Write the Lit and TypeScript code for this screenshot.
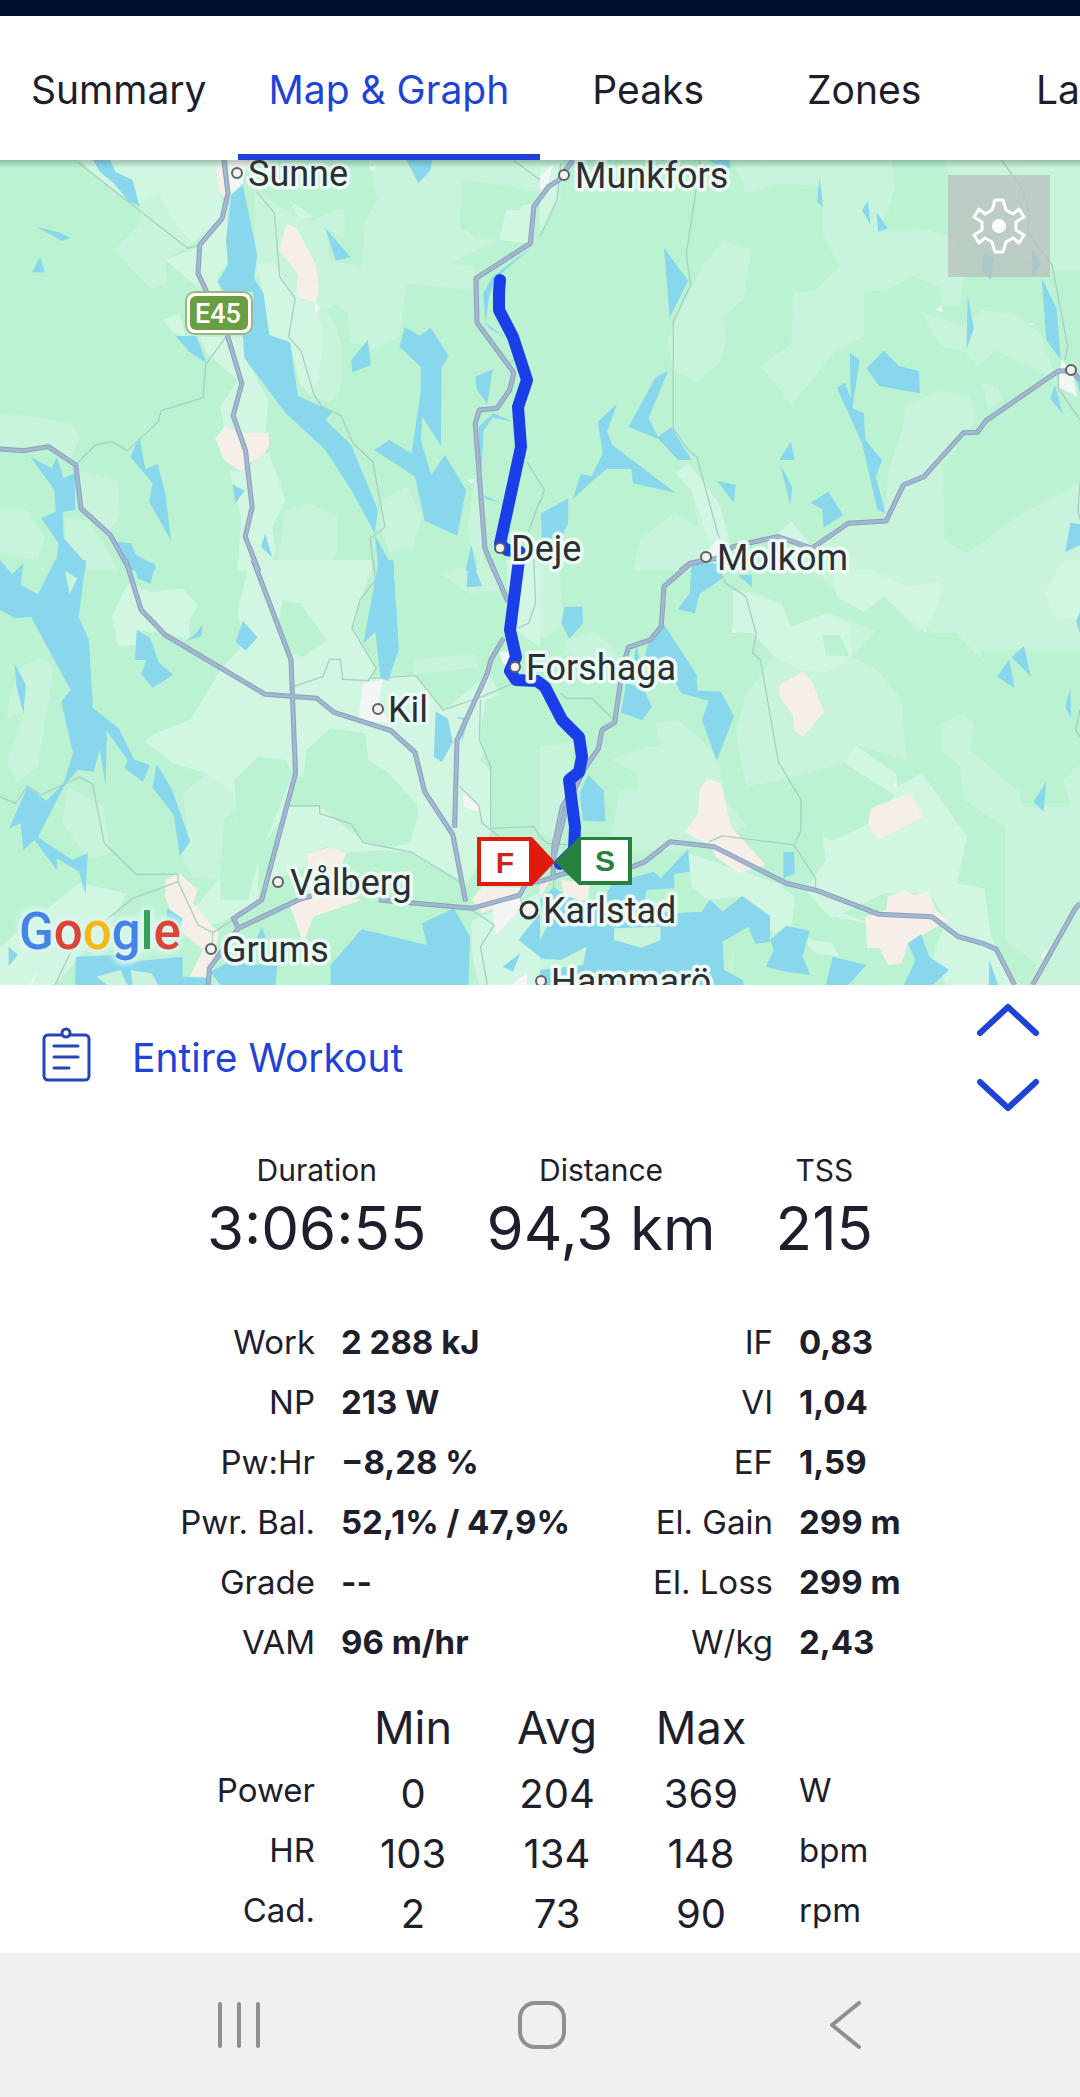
import { LitElement, html, svg, css } from "lit";
import { customElement, property, state } from "lit/decorators.js";

interface Tile {
  x: number;
  y: number;
  pale: string;
  paler: string;
  wood: string;
  sand: string;
  town: string;
  water: string;
  island: string;
  minor: string;
  major: string;
}

interface Place {
  name: string;
  cx: number;
  cy: number;
  x: number;
  y: number;
  big?: boolean;
}

/* Map geometry, split in four tiles. Tile units are about a third of a map unit. */
const TILES: Tile[] = [
  {
    x: 0,
    y: -10,
    pale:
      "M330 300L410 220 405 165 460 130 500 210 560 280 480 330 485 400 440 418ZM740 120L860 200 910 210 1000 170 1000 260 945 240 960 330 1050 350 1060 210 1095 150 1070 30 1568 30 1568 120 1525 125 1500 110 1340 90 1340 240 1450 265 1310 340 1380 350 1370 420 1180 400 1160 560 1080 600 1015 575 1010 490 980 465 910 490 850 440 800 340 740 380ZM0 790L100 800 210 820 235 860 200 940 150 890 0 890ZM220 960L340 990 350 1100 310 1150 235 1075ZM185 1100L260 1110 345 1262 250 1262 190 1165ZM0 1080L80 1080 130 1160 110 1230 0 1210ZM830 1080L900 1060 980 1100 980 1200 950 1262 800 1262ZM1110 1050L1180 1010 1225 1100 1200 1190 1130 1205 1100 1120ZM1380 980L1410 1130 1400 1262 1355 1150ZM905 460L960 490 990 580 990 720 955 760 900 735 870 640Z",
    paler:
      "M400 165L460 130 500 210 560 280 645 200 640 30 230 30 300 100ZM580 290L660 170 660 340 630 380 640 425 600 425 560 400 480 330ZM475 510L520 490 540 560 500 545ZM580 560L705 560 715 630 780 750 770 850 720 850 650 832 640 770 690 690 600 610ZM665 960L700 965 765 915 780 905 830 1050 790 1130 800 1200 780 1262 690 1262 700 1100ZM745 340L800 340 850 440 915 460 940 560 925 690 900 735 870 700 842 577 782 555 765 430ZM1470 180L1545 160 1540 280 1450 270ZM840 150L910 200 870 210Z",
    wood: "M860 120L1080 50 1090 140 1060 180 900 175ZM1345 90L1525 120 1510 180 1450 180 1450 265 1380 265 1335 220Z",
    sand:
      "M832 222L862 235 915 340 927 410 917 458 860 440 865 375 845 345 810 300ZM650 832L720 850 780 848 782 885 765 915 725 940 700 965 650 930 625 865ZM640 30L628 60 635 120 655 150 665 120 655 30Z",
    town: "M662 30H720L705 100 668 135ZM1070 50L1092 48 1080 64ZM915 455L930 475 915 492ZM1355 990L1380 987 1370 1000Z",
    water:
      "M270 30L320 30 335 65 385 90 405 168 375 155 330 100 290 65ZM105 230L175 248 205 265 180 272ZM117 320L130 367 93 367ZM705 105L747 315 737 385 765 430 782 555 842 577 865 737 965 785 945 810 1020 885 1097 1080 1088 1150 1020 1020 945 900 830 790 710 625 705 555 735 500 735 425 650 425 632 395 662 345 656 270 672 135ZM945 235L1018 322 975 332ZM1180 30L1255 30 1250 60 1215 100ZM510 558L570 558 600 640 550 605ZM1068 570L1077 645 1023 667 1020 630ZM1175 532L1220 557 1250 533 1303 617 1282 655 1280 887 1226 800 1222 870 1252 975 1292 915 1353 1020 1328 1157 1233 1112 1205 980 1087 900 1130 870 1195 910 1222 720 1222 650 1160 590ZM1380 680L1430 658 1415 762 1385 720ZM405 862L422 957 458 942 480 1030 497 1172 433 1055 443 1000 378 920ZM88 920L150 955 165 922 185 985 218 970 218 1080 182 1085 185 1165 250 1240 248 1262 160 1262 170 1180 120 1105 162 1085 158 1020ZM675 1003L710 1022 683 1060ZM770 1150L790 1222 758 1190ZM1088 1155L1145 1262 1100 1262ZM1368 1185L1385 1262 1352 1262ZM335 1175L380 1180 395 1215 450 1245 450 1262 375 1262ZM1545 290L1430 380 1403 430 1410 520 1420 440 1440 385ZM1390 830L1432 790 1490 815 1430 803 1405 840 1395 1000ZM1405 1035L1450 1058 1410 1046ZM1410 520L1470 565 1420 535Z",
    island: "",
    minor:
      "M228 38L545 295 580 285M745 125L797 190 812 380 857 447 838 560 875 605 912 735 935 770 990 797 1025 880 1082 935 1118 1132 1075 1165 1085 1260M655 562L597 645 590 743 468 782 460 815 370 902 325 875 277 885 220 945M1490 30L1568 90M1530 935L1568 1000M1568 1050L1535 1145M1480 640L1500 625",
    major:
      "M650 30L662 130 645 205 580 285 575 370 600 425M660 555L702 700 677 797 713 902 732 1072 712 1160 752 1265M0 897L70 902 140 890 220 945 235 1075 320 1155 378 1262M1568 145L1550 170 1540 280 1382 385 1385 518 1492 668 1480 720 1443 775 1392 780 1380 820 1408 1195 1435 1262",
  },
  {
    x: 540,
    y: -10,
    pale:
      "M560 30H1020L1030 110 1010 190 980 245 1120 238 1200 260 1230 380 1220 470 1170 470 1160 410 1080 378 1010 420 940 425 940 560 860 600 730 765 640 650 730 580 735 430 800 420 870 350 820 250 820 110 700 100 600 130ZM530 270L615 300 590 450 530 500 540 580 520 640 455 697 385 660 370 570 400 500 470 350ZM1105 485L1165 590 1230 600 1275 655 1320 600 1500 690 1450 545 1370 490 1280 480 1230 525ZM1060 770L1160 720 1250 740 1270 800 1200 910 1170 940 1175 1170 1240 1210 1400 1090 1568 1000 1568 1262 700 1262 800 1195 900 1120 1000 1110 1010 970 1055 830ZM395 970L430 940 520 1060 550 1170 560 1262 270 1262 290 1170 390 1088 460 1130 440 1020ZM1170 30H1568V360H1490L1330 300 1200 100ZM1285 700L1330 710 1340 750 1300 780ZM0 30H60V150L0 250Z",
    paler:
      "M395 970L430 940 520 1060 550 1170 490 1170 440 1020ZM690 1150L730 1115 790 1190ZM0 50L60 40 48 140 0 230Z",
    wood: "",
    sand: "",
    town: "M1515 630L1545 665 1560 740 1505 710ZM0 80L35 45 25 100 0 120ZM460 1235L515 1165 530 1190 490 1240ZM1150 480L1165 465 1168 485ZM1418 520L1438 522 1425 525Z",
    water:
      "M490 30H550L553 55 520 48ZM812 80L822 172 805 155ZM952 152L960 225 935 180ZM977 187L1010 235 982 245ZM360 293L430 392 377 503ZM372 662L315 805 342 860 382 832 440 930 400 930 345 868 257 830 335 683ZM223 762L195 845 210 885 393 1028 270 1000 265 957 195 957 155 990 95 1048 118 972 150 978 182 910 168 815ZM82 1045V1120L60 1165H5L3 1090ZM900 608L928 630 907 775 940 790 945 870 993 930 975 980 1003 1090 980 1080 935 880 862 713 885 698 902 745ZM998 602L1043 648 1100 663 1103 730 985 708 948 655ZM728 875L740 930H695ZM698 945L732 1010 727 1065ZM515 993L568 1005 563 1058ZM837 1025L880 1095 823 1133 820 1078 785 1058ZM1242 437L1260 535 1238 598ZM1457 385L1500 475 1512 630 1470 570ZM1495 705L1518 793 1482 745ZM1540 1118L1568 1122V1185L1525 1207ZM1290 310L1318 325 1310 390 1282 362ZM1428 295L1455 340 1430 382ZM440 1240H505L530 1262H440ZM1550 665L1568 690V730Z",
    island: "",
    minor:
      "M465 30L453 120 425 310 437 405 387 515V835L430 900 455 920 520 1165M1340 30L1400 115 1422 200 1415 245 1487 345 1532 590 1525 630M1505 670V715L1568 810M0 260L50 150 55 90 60 40M1568 1000L1562 1080 1568 1110M0 1000L12 1020 0 1060",
    major:
      "M408 1262L435 1240 515 1225 560 1190 690 1160 790 1195 895 1120 1005 1113 1055 1005 1115 980 1230 848 1270 847 1295 812 1505 663 1545 662 1568 690M0 145L25 110 55 90 75 60 95 30",
  },
  {
    x: 0,
    y: 400,
    pale:
      "M530 700L600 640 680 700 690 740 650 780 640 960 560 950 520 880 550 850ZM200 680L300 740 320 880 260 900 180 790ZM1280 40L1420 0 1460 90 1360 100ZM130 290L155 330 110 620 50 670 20 600 70 460 20 470 30 400 60 320ZM1200 300L1380 280 1390 320 1200 345Z",
    paler:
      "M720 20L700 0H1090L1060 80 1022 200 1092 320 1080 350 1205 345 1290 450 1420 340 1460 420 1395 600 1430 640 1430 800 1380 930 1340 1000 1200 880 1135 860 1210 735 1130 640 1060 600 1060 520 960 505 890 570 920 650 860 650 840 740 750 880 750 1020 640 1090 520 1100 640 950 690 830 680 700 600 640 500 610 480 590 420 545 450 520 550 480 600 400 640 330 710 250 690 160ZM370 70L440 95 530 85 575 135 550 180 550 240 480 220 400 210 395 255 345 260 325 170ZM0 1160L230 970 370 1000 330 1070 160 1275 0 1275ZM840 740L930 740 1060 850 1200 880 1340 960 1340 1000 1100 1020 1000 880 950 860 890 880 890 920 790 960 750 1030ZM1370 1080L1568 1000V1275H1390L1370 1180ZM1470 0H1568V260L1480 200Z",
    wood: "M820 120L870 130 950 240 880 290 840 280 810 180ZM750 590L830 600 850 640 750 900 720 1020 640 1020 640 900 690 830 680 660ZM1210 725L1215 760 1190 850 1140 860 1135 790ZM890 570L960 505 1060 520 1070 600 1130 640 1110 700 1070 750 980 755 900 700 880 650ZM1000 880L1100 870 1200 880 1340 960 1365 1130 1225 1090 1010 1110 900 1160 980 1060 1060 1030 1000 930ZM1410 420L1568 360V800H1430L1425 610 1392 540Z",
    sand:
      "M890 880L960 862 1005 880 975 960 1010 1010 1050 1020 910 1070 880 1150 840 1030 900 1000ZM520 940L575 990 560 1030 635 1120 615 1250 550 1250 590 1170 510 1100 480 1010 480 960ZM1370 1020L1400 980 1530 985 1520 1010 1400 1060Z",
    town: "M1055 370L1110 360 1100 430 1130 490 1040 480ZM1345 700L1390 740V755L1345 740ZM1450 275H1490V320L1460 310ZM1430 1040L1520 1000 1500 1060 1440 1125ZM1500 1262L1530 1240V1275H1480ZM85 1275L105 1235 95 1275Z",
    water:
      "M0 0L35 42 68 10 60 75 110 103 160 0H250L228 170 258 240 270 445 345 505 390 600 435 615 415 665 362 625 370 600 310 512 307 678 290 570 272 635 225 630 185 680 110 832 210 900 255 880 248 1002 230 935 165 895V930L100 840 68 870 60 790 27 805 80 680 135 722 185 670 212 580 178 425 205 390 90 170 45 175 0 150ZM382 0L450 12 437 72 400 55ZM1100 0H1142L1158 270 1127 362 1105 355 1090 215 1055 250ZM1360 0L1375 15 1400 78 1355 82ZM588 193L585 228 540 243 570 220ZM705 182L748 232 713 272 685 245ZM397 210L437 235 460 305 502 345 443 383 410 342 425 300 392 300ZM42 310L75 375 68 462 48 380ZM1265 455L1300 475 1315 545 1283 607 1260 590ZM455 612L500 690 552 845 522 888 505 765 443 683ZM485 1045L530 1075 525 1100H480ZM25 1160L52 1185 25 1218ZM760 1100L780 1160 740 1150ZM220 1190L330 1185 380 1205 530 1190 530 1250 610 1255V1275H218ZM610 1235L660 1210 805 1215 800 1275H640ZM960 1215L1050 1108 1240 1155 1225 1090 1318 1045 1365 1130 1360 1275H960ZM1510 1180L1490 1235 1460 1220ZM1568 1060L1505 1140 1568 1190ZM1320 470L1360 475 1340 550 1345 480Z",
    island: "M188 32L225 55 202 102ZM280 1250L350 1230 370 1275H310ZM380 1230L440 1240 460 1275H385Z",
    minor:
      "M0 710L45 730 80 678 118 705 230 652 268 670 303 850 395 943H517V965L575 1095 617 1118 680 1078M517 965L385 1015 210 1165 160 1275M617 1118V1170M850 380L938 350 957 298H988L995 358 1070 362 1092 325 1022 205 1045 120 1090 60 1085 0M1070 355L1207 347 1287 450 1400 410 1490 370M1395 420L1392 540 1425 620V805L1550 800 1568 830M838 737H928V760L1020 792 1055 848 1195 877 1340 970M1335 680L1390 735 1400 790 1450 830M1550 0L1555 130 1535 190 1500 205M1370 1050L1435 1095 1395 1160 1415 1275M1510 1010L1530 1080",
    major:
      "M735 0L845 300 858 640 760 1020 678 1075 692 1105 640 1180 608 1225 605 1275M692 1105L870 1018 905 1008M1100 1020L1370 1045 1510 1005 1530 965 1568 965M365 0L410 150 480 225 770 403 920 415 970 457 1135 512 1205 577 1233 695 1315 825 1352 1025M1422 0L1475 125M1462 235L1425 300 1415 340 1327 540 1320 803",
  },
  {
    x: 540,
    y: 400,
    pale:
      "M700 0H1568V270L1280 270 1290 310 1210 220 1130 220 1135 130 1100 220 1000 110 940 155 900 100 860 90 800 40ZM560 90L630 100 700 130 730 200 840 160 900 180 975 215 905 290 980 330 1050 420 1065 600 915 555 885 610 700 660 600 680 580 600 570 500 600 400 680 290 620 220 560 215ZM1165 490L1230 460 1260 490 1250 570 1395 700 1400 740 1540 740 1520 660 1568 610V1275H1420L1440 1210 1350 1140V800L1230 720 1220 620 1165 570ZM0 0L60 40 65 200 0 240ZM75 240L160 215 220 270 240 320 70 280ZM335 490L400 480 470 540 520 600 540 720 600 800 420 870 200 870 230 690 285 690 280 640 205 600 310 560 350 560ZM0 560L100 545 60 850 0 820Z",
    paler:
      "M885 610L915 555 1035 640V680L1110 640 1240 830 1210 970 1290 985 1310 1130 1390 1275H1180L1140 1190 1180 1080 1130 1000 1000 1000 880 1060 960 1090 950 1150 850 1080 770 990 830 900 820 830 760 810 850 840 960 790 1030 705ZM430 880L690 970 740 1010 730 1100 680 1120 620 1060 580 1010 490 1020 440 980ZM850 30L960 30 1070 80 1160 65 1165 100 1120 220 1000 110 940 155 860 110ZM560 90L700 130 730 200 830 160 900 190 905 290 830 340 760 330 680 290 620 220 560 215ZM1465 100L1520 0H1568V180L1490 170ZM750 1130L850 1150 870 1190 800 1180Z",
    wood: "M820 225L870 225 900 290 830 285ZM850 1070L950 1090V1190L880 1170 850 1110Z",
    sand:
      "M695 375L765 335 790 365 825 455 765 530 740 515 733 465 697 410ZM485 655L525 670 555 800 655 915 580 940 510 890 500 860 420 815 460 760 462 690ZM960 745L1075 700 1113 770 985 840 953 795ZM945 1070L1005 1050 1010 1010 1060 990 1085 1005 1130 995 1150 1050 1185 1080 1070 1150 1050 1210 1010 1215 985 1165H950ZM60 960L145 970 140 1015 110 1030 70 1000ZM0 970L30 960 0 1010Z",
    town: "M560 200L570 218H558ZM1025 680L1035 660V680ZM1455 1185L1475 1165 1460 1200Z",
    water:
      "M440 15L520 10 530 55 463 102 450 160 400 148 435 100ZM575 45H615V82ZM72 140H123L125 190 85 237 62 190ZM358 190L455 345 457 392 525 395 563 468 513 602 470 480 490 422 410 400 380 340 300 310 315 245ZM280 258L290 300 270 310ZM250 370L300 385 325 440 297 480 235 458ZM140 645L185 692 190 785 125 782 115 700ZM1405 258L1425 350 1370 292ZM1362 298L1378 383 1327 350ZM1540 385L1542 475 1525 440ZM1568 155V220L1557 185ZM1470 665L1462 755 1433 725ZM707 877H738L740 940 707 955ZM190 1005L210 970 330 935 350 955 430 868 435 935 390 942 390 985 310 990 300 1040 380 1060 470 1055 493 1018 530 1055 587 1008 668 1068V1145L625 1152 605 1100 530 1145 535 1230 590 1262V1275H0V1020L40 980 80 1010 150 1030ZM715 1097L783 1113 762 1190 785 1245 715 1235 655 1220 680 1170 668 1140ZM850 1190L948 1215 895 1275H830ZM1107 1123L1130 1190 1188 1230 1140 1275H1057L1090 1200 1068 1150ZM1305 1200L1330 1275H1303Z",
    island: "M215 1105L350 1100V1140L295 1163 215 1140ZM0 1195L60 1200 135 1160 125 1215 0 1230ZM545 1225L562 1175V1240ZM0 1020L20 1100 0 1140Z",
    minor:
      "M520 30L540 70 598 110 628 222 617 278 640 300 692 605 758 720 757 815 737 855 800 955V985M490 845L530 828 737 855M60 400L75 415H150L215 480M0 830L20 850 90 855M40 960V1020M1568 450L1555 510 1568 530",
    major:
      "M0 965L70 940 270 920 305 905 378 845 505 860 715 970 805 992 985 1063 1138 1070 1215 1130 1285 1150 1325 1168 1378 1275M1568 1030L1555 1045 1430 1275M480 0L435 12 360 80 352 200 320 240 257 262 240 320 217 487 180 510 170 565 130 625 65 740 40 860 38 960M130 625L80 730 50 850 38 900",
  },
];

const PLACES: Place[] = [
  { name: "Sunne", cx: 237, cy: 13, x: 248, y: 26 },
  { name: "Munkfors", cx: 564, cy: 15, x: 575, y: 28 },
  { name: "Deje", cx: 500, cy: 388, x: 511, y: 401 },
  { name: "Molkom", cx: 706, cy: 397, x: 717, y: 410 },
  { name: "Forshaga", cx: 515, cy: 507, x: 526, y: 520 },
  { name: "Kil", cx: 378, cy: 549, x: 388, y: 562 },
  { name: "Vålberg", cx: 278, cy: 722, x: 290, y: 735 },
  { name: "Grums", cx: 211, cy: 789, x: 222, y: 802 },
  { name: "Karlstad", cx: 529, cy: 750, x: 543, y: 763, big: true },
  { name: "Hammarö", cx: 541, cy: 821, x: 551, y: 834 },
  { name: "", cx: 1071, cy: 210, x: 0, y: 0 },
];

const ROUTE =
  "M500 120L499 132V150L513 177 527 220 518 247 521 287 500 384 507 390 520 392 510 470 516 497 510 511 516 520 537 521 545 527 562 560 579 577 582 597 579 612 569 620 575 667 574 690 560 704";

@customElement("workout-map")
export class WorkoutMap extends LitElement {
  static styles = css`
    :host {
      display: block;
      position: relative;
      background: #baf2d2;
      overflow: hidden;
    }
    .map {
      display: block;
      width: 100%;
      aspect-ratio: 1080 / 825;
    }
    .pale { fill: #c7f4da; }
    .paler { fill: #d1f6e2; }
    .wood { fill: #baf2d2; }
    .sand { fill: #f5efe7; }
    .town { fill: #f4f5f5; }
    .water { fill: #88d7ed; }
    .minor, .casing, .road {
      fill: none;
      stroke-linejoin: round;
      vector-effect: non-scaling-stroke;
    }
    .minor { stroke: #a9cfc4; stroke-width: 1.3; }
    .casing { stroke: #8c9fc0; stroke-width: 5; }
    .road { stroke: #a2b8cf; stroke-width: 3; }
    .route {
      fill: none;
      stroke: #1a3fe8;
      stroke-width: 12;
      stroke-linejoin: round;
      stroke-linecap: round;
    }
    .dot { fill: #f1f1f1; stroke: #5d6164; stroke-width: 2; }
    .dot.big { stroke: #2f3234; stroke-width: 3; }
    .place {
      font: 400 36px Roboto, sans-serif;
      fill: #2b2f33;
      stroke: #ebfaf4;
      stroke-width: 7;
      stroke-linejoin: round;
      paint-order: stroke;
    }
    .shield { font: 500 27px Roboto, sans-serif; fill: #fff; text-anchor: middle; }
    .pin { font: 700 30px "Liberation Sans", sans-serif; text-anchor: middle; }
    .brand {
      font: 500 51px Roboto, sans-serif;
      filter: drop-shadow(0 0 3px #dcf6ee) drop-shadow(0 0 3px #dcf6ee) drop-shadow(0 0 2px #dcf6ee);
    }
    .shade {
      position: absolute;
      inset: 0 0 auto;
      height: 8px;
      background: linear-gradient(rgba(40, 70, 60, 0.3), rgba(40, 70, 60, 0));
    }
    .settings {
      position: absolute;
      top: 15px;
      right: 30px;
      width: 102px;
      height: 102px;
      display: grid;
      place-items: center;
      padding: 0;
      border: 0;
      background: rgba(186, 192, 190, 0.75);
    }
  `;

  private layer(name: keyof Tile, cls: string) {
    return TILES.map(
      (t) => svg`<path class=${cls} transform=${`translate(${t.x} ${t.y}) scale(0.3444 0.3333)`} d=${t[name]}></path>`
    );
  }

  render() {
    return html`
      <svg class="map" viewBox="0 0 1080 825" preserveAspectRatio="xMidYMid slice" role="img" aria-label="Map of the ride">
        ${this.layer("pale", "pale")} ${this.layer("paler", "paler")} ${this.layer("wood", "wood")}
        ${this.layer("sand", "sand")} ${this.layer("town", "town")} ${this.layer("water", "water")}
        ${this.layer("island", "pale")} ${this.layer("minor", "minor")} ${this.layer("major", "casing")}
        ${this.layer("major", "road")}
        <path class="route" d=${ROUTE}></path>
        <rect x="185" y="131" width="68" height="44" rx="10" fill="#9db67f"></rect>
        <rect x="187" y="133" width="64" height="40" rx="8" fill="#fff"></rect>
        <rect x="190" y="136" width="58" height="34" rx="6" fill="#6b9d42"></rect>
        <text class="shield" x="218" y="163">E45</text>
        ${PLACES.map(
          (p) => svg`
            <circle class=${p.big ? "dot big" : "dot"} cx=${p.cx} cy=${p.cy} r=${p.big ? 8 : 5}></circle>
            <text class="place" x=${p.x} y=${p.y}>${p.name}</text>`
        )}
        <path d="M477 677H532L555 702 532 726H477Z" fill="#e01b0c"></path>
        <rect x="481" y="681" width="48" height="41" fill="#fff"></rect>
        <text class="pin" x="505" y="713" fill="#d3211c">F</text>
        <path d="M632 677H579L555 702 579 725H632Z" fill="#28803f"></path>
        <rect x="581" y="680" width="47" height="41" fill="#fff"></rect>
        <text class="pin" x="605" y="711" fill="#28803f">S</text>
        <text class="brand" x="19" y="789"><tspan fill="#4484e8">G</tspan><tspan fill="#db4437">o</tspan><tspan fill="#f4b912">o</tspan><tspan fill="#4484e8">g</tspan><tspan fill="#33a457">l</tspan><tspan fill="#db4437">e</tspan></text>
      </svg>
      <div class="shade"></div>
      <button class="settings" aria-label="Map settings">
        <svg width="56" height="58" viewBox="-28 -29 56 58" fill="none" stroke="#fff" stroke-width="3" stroke-linejoin="round">
          <path
            d="M-4 -26H4L7 -16 14 -12 20 -17 25 -9 17 -4V4L25 9 20 17 14 12 7 16 4 26H-4L-7 16 -14 12 -20 17 -25 9 -17 4V-4L-25 -9 -20 -17 -14 -12 -7 -16Z"
          ></path>
          <circle r="7" fill="#fff" stroke="none"></circle>
        </svg>
      </button>
    `;
  }
}

@customElement("workout-stats")
export class WorkoutStats extends LitElement {
  @property({ attribute: false }) totals: string[][] = [
    ["Duration", "3:06:55"],
    ["Distance", "94,3 km"],
    ["TSS", "215"],
  ];
  @property({ attribute: false }) metrics: string[][] = [
    ["Work", "2 288 kJ", "IF", "0,83"],
    ["NP", "213 W", "VI", "1,04"],
    ["Pw:Hr", "−8,28 %", "EF", "1,59"],
    ["Pwr. Bal.", "52,1% / 47,9%", "El. Gain", "299 m"],
    ["Grade", "--", "El. Loss", "299 m"],
    ["VAM", "96 m/hr", "W/kg", "2,43"],
  ];
  @property({ attribute: false }) ranges: string[][] = [
    ["Power", "0", "204", "369", "W"],
    ["HR", "103", "134", "148", "bpm"],
    ["Cad.", "2", "73", "90", "rpm"],
  ];

  static styles = css`
    :host { display: block; color: #1d202c; }
    dl, dt, dd { margin: 0; }
    .totals { display: flex; justify-content: center; gap: 60px; text-align: center; }
    .totals dt { font-size: 30px; line-height: 40px; }
    .totals dd { font-size: 60px; line-height: 76px; }
    .metrics {
      display: grid;
      grid-template-columns: 1fr 216px 216px 1fr;
      padding: 46px 0 0 34px;
      font-size: 33px;
      line-height: 60px;
      white-space: nowrap;
    }
    .metrics dt { text-align: right; }
    .metrics dd { font-weight: 700; }
    .metrics .left { padding-right: 26px; }
    .metrics .right { padding-left: 26px; }
    .frame { padding: 26px 0 0 34px; }
    table { width: 100%; table-layout: fixed; border-collapse: collapse; }
    th, td { padding: 0; font-weight: 400; font-size: 33px; height: 60px; vertical-align: top; }
    .narrow { width: 144px; }
    thead th { font-size: 45px; height: 66px; line-height: 60px; }
    tbody th { text-align: right; padding-right: 26px; }
    .number { font-size: 40px; line-height: 60px; text-align: center; }
    .unit { padding-left: 26px; }
    tbody th, .unit { line-height: 52px; }
  `;

  render() {
    return html`
      <dl class="totals">
        ${this.totals.map(([name, value]) => html`<div><dt>${name}</dt><dd>${value}</dd></div>`)}
      </dl>
      <dl class="metrics">
        ${this.metrics.map(
          ([a, av, b, bv]) => html`<dt class="left">${a}</dt><dd>${av}</dd><dt>${b}</dt><dd class="right">${bv}</dd>`
        )}
      </dl>
      <div class="frame">
        <table>
          <thead>
            <tr>
              <td></td>
              <th class="narrow" scope="col">Min</th>
              <th class="narrow" scope="col">Avg</th>
              <th class="narrow" scope="col">Max</th>
              <td></td>
            </tr>
          </thead>
          <tbody>
            ${this.ranges.map(
              ([name, min, avg, max, unit]) => html`<tr>
                <th scope="row">${name}</th>
                <td class="number">${min}</td>
                <td class="number">${avg}</td>
                <td class="number">${max}</td>
                <td class="unit">${unit}</td>
              </tr>`
            )}
          </tbody>
        </table>
      </div>
    `;
  }
}

@customElement("app-root")
export class AppRoot extends LitElement {
  @state() private active = "Map & Graph";
  private tabs = ["Summary", "Map & Graph", "Peaks", "Zones", "Laps"];

  static styles = css`
    :host {
      display: flex;
      flex-direction: column;
      min-height: 100vh;
      background: #fff;
      font-family: Inter, sans-serif;
      overflow: hidden;
    }
    button { font: inherit; color: inherit; background: none; border: 0; padding: 0; }
    .status { height: 16px; background: #010e2d; }
    .tabs { display: flex; overflow: hidden; }
    .tab {
      flex: none;
      box-sizing: border-box;
      min-width: 216px;
      height: 144px;
      padding: 8px 31px 0;
      border-bottom: 6px solid transparent;
      font-size: 39px;
      color: #1d202c;
    }
    .tab.active { color: #1f43d6; border-color: #1f43d6; }
    .selection { display: flex; align-items: center; padding: 18px 40px 20px; color: #1f43d6; }
    .entire { display: flex; align-items: center; gap: 40px; font-size: 39px; line-height: 48px; }
    .steps { margin-left: auto; display: grid; gap: 41px; }
    .steps button, .steps svg, .entire svg { display: block; }
    .stats { padding-top: 18px; }
    .system {
      margin-top: auto;
      height: 144px;
      display: grid;
      grid-template-columns: repeat(3, 1fr);
      padding: 0 84px 0 88px;
      background: #f0f0f2;
    }
    .system button { display: grid; place-items: center; }
  `;

  render() {
    return html`
      <div class="status"></div>
      <nav class="tabs" role="tablist">
        ${this.tabs.map(
          (t) => html`<button
            role="tab"
            aria-selected=${t === this.active}
            class="tab ${t === this.active ? "active" : ""}"
            @click=${() => (this.active = t)}
          >${t}</button>`
        )}
      </nav>
      <workout-map></workout-map>
      <section class="selection">
        <button class="entire">
          <svg width="52" height="64" viewBox="0 0 52 64" fill="none" stroke="#2444b8" stroke-width="3" stroke-linecap="round" stroke-linejoin="round">
            <rect x="4" y="9" width="45" height="45" rx="4"></rect>
            <circle cx="26" cy="7" r="4" fill="#fff"></circle>
            <path d="M14 20H38M14 31H38M14 42H29"></path>
          </svg>
          <span>Entire Workout</span>
        </button>
        <div class="steps">
          <button aria-label="Previous lap">
            <svg width="64" height="34" viewBox="0 0 64 34" fill="none" stroke="#1f43d6" stroke-width="6" stroke-linecap="round" stroke-linejoin="round"><path d="M4 30L32 4 60 30"></path></svg>
          </button>
          <button aria-label="Next lap">
            <svg width="64" height="34" viewBox="0 0 64 34" fill="none" stroke="#1f43d6" stroke-width="6" stroke-linecap="round" stroke-linejoin="round"><path d="M4 4L32 30 60 4"></path></svg>
          </button>
        </div>
      </section>
      <workout-stats class="stats"></workout-stats>
      <footer class="system">
        <button aria-label="Recent apps">
          <svg width="48" height="48" viewBox="0 0 48 48" stroke="#8f8f8f" stroke-width="4" stroke-linecap="round"><path d="M5 3V45M24 3V45M43 3V45"></path></svg>
        </button>
        <button aria-label="Home">
          <svg width="48" height="48" viewBox="0 0 48 48" fill="none" stroke="#8f8f8f" stroke-width="4"><rect x="2" y="2" width="44" height="44" rx="15"></rect></svg>
        </button>
        <button aria-label="Back">
          <svg width="48" height="48" viewBox="0 0 48 48" fill="none" stroke="#8f8f8f" stroke-width="4" stroke-linecap="round" stroke-linejoin="round"><path d="M38 2L11 24 38 46"></path></svg>
        </button>
      </footer>
    `;
  }
}
